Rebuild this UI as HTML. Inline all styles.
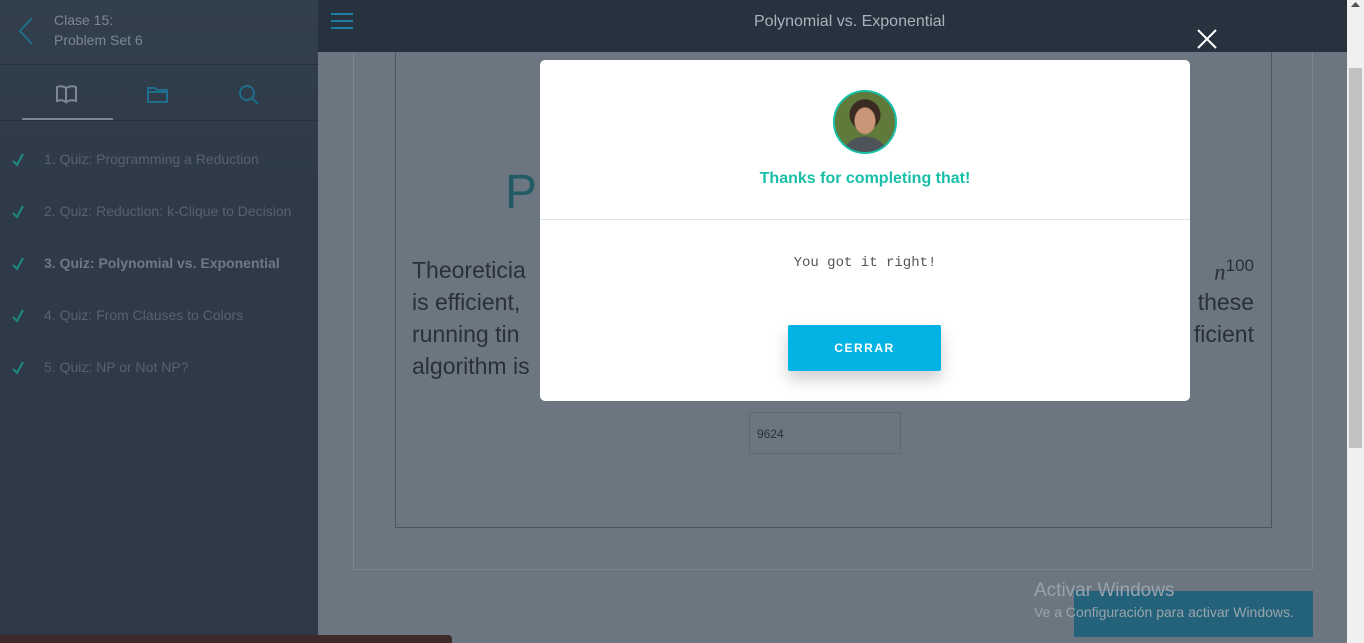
<!DOCTYPE html>
<html><head><meta charset="utf-8"><style>
*{margin:0;padding:0;box-sizing:border-box}
body{width:1364px;height:643px;overflow:hidden;background:#6b7680;font-family:"Liberation Sans",sans-serif;position:relative}
.side{position:absolute;left:0;top:0;width:318px;height:643px;background:linear-gradient(#323f4c,#2e3a47 30%,#2e3a47)}
.side .hdr{height:65px;border-bottom:1px solid #27313c;position:relative}
.side .t{position:absolute;left:54px;top:10px;color:#7c8792;font-size:14px;line-height:20px}
.tabs{height:56px;border-bottom:1px solid #27313c;position:relative}
.tabs .ul{position:absolute;left:22px;bottom:0;width:91px;height:2px;background:#7c8792}
.item{position:absolute;left:0;font-size:14px;color:#56626d}
.item .ck{position:absolute;left:12px;top:2px}
.item span.l{position:absolute;left:44px;white-space:nowrap}
.top{position:absolute;left:318px;top:0;width:1029px;height:52px;background:#27323f;color:#aab3bb;font-size:16px;line-height:44px}
.top span{position:absolute;left:436px}
.scroll{position:absolute;left:1347px;top:0;width:17px;height:643px;background:#f0f0f0}
.scroll i{position:absolute;left:2px;top:68px;width:13px;height:380px;background:#c1c1c1}
.card{position:absolute;left:353px;top:40px;width:960px;height:530px;border:1px solid #7a848d}
.inner{position:absolute;left:395px;top:40px;width:877px;height:488px;border:1px solid #4d5660;border-top:none}
.txt{position:absolute;left:412px;font-size:23px;color:#2a3037;line-height:32px;white-space:nowrap}
.r{left:auto;right:110px}
.modal{position:absolute;left:540px;top:60px;width:650px;height:341px;background:#fff;border-radius:5px}
.av{position:absolute;left:293px;top:30px;width:64px;height:64px;border-radius:50%;border:2px solid #17bfa8;background:radial-gradient(ellipse 11px 14px at 50% 48%,#c99677 0 10px,transparent 11px),radial-gradient(circle at 50% 38%,#3a2b22 0 15px,transparent 16px),radial-gradient(circle at 50% 115%,#4d5358 0 24px,transparent 25px),#5f7a3a;overflow:hidden}
.thx{position:absolute;left:0;width:100%;top:110px;text-align:center;color:#17bfa8;font-size:16px;font-weight:bold}
.hr{position:absolute;left:0;right:0;top:159px;height:1px;background:#dde3e8}
.got{position:absolute;left:0;width:100%;top:195px;text-align:center;font-family:"Liberation Mono",monospace;font-size:14px;color:#555}
.btn{position:absolute;left:248px;top:265px;width:153px;height:46px;background:#02b3e4;color:#fff;font-size:12px;font-weight:bold;letter-spacing:1.5px;text-align:center;line-height:46px;border-radius:2px;box-shadow:0 8px 16px rgba(0,0,0,.2)}
</style></head><body>
<div class="side">
 <div class="hdr">
  <svg style="position:absolute;left:17px;top:16px" width="18" height="30"><path d="M15 2 L3 15 L15 28" stroke="#1e6e8c" stroke-width="2" fill="none"/></svg>
  <div class="t">Clase 15:<br>Problem Set 6</div>
 </div>
 <div class="tabs">
  <svg style="position:absolute;left:55px;top:19px" width="24" height="20"><path d="M2 3 Q7 1 11 4 V18 Q7 15 2 17 Z M11 4 Q16 1 21 3 V17 Q16 15 11 18" stroke="#7c8792" stroke-width="2" fill="none"/></svg>
  <svg style="position:absolute;left:147px;top:20px" width="22" height="20"><path d="M1 3 H8 L10 5 H20 V17 H1 Z M1 7 H20" stroke="#1e6e8c" stroke-width="2" fill="none"/></svg>
  <svg style="position:absolute;left:238px;top:19px" width="22" height="22"><circle cx="9" cy="9" r="7" stroke="#1e6e8c" stroke-width="2" fill="none"/><path d="M14 14 L20 20" stroke="#1e6e8c" stroke-width="2"/></svg>
  <div class="ul"></div>
 </div>
 <div class="item" style="top:151px"><svg class="ck" width="12" height="14"><path d="M1 8 L5 12 L11 1" stroke="#1f8a82" stroke-width="2" fill="none"/></svg><span class="l">1. Quiz: Programming a Reduction</span></div>
 <div class="item" style="top:203px"><svg class="ck" width="12" height="14"><path d="M1 8 L5 12 L11 1" stroke="#1f8a82" stroke-width="2" fill="none"/></svg><span class="l">2. Quiz: Reduction: k-Clique to Decision</span></div>
 <div class="item" style="top:255px;color:#6d7985;font-weight:bold"><svg class="ck" width="12" height="14"><path d="M1 8 L5 12 L11 1" stroke="#1f8a82" stroke-width="2" fill="none"/></svg><span class="l">3. Quiz: Polynomial vs. Exponential</span></div>
 <div class="item" style="top:307px"><svg class="ck" width="12" height="14"><path d="M1 8 L5 12 L11 1" stroke="#1f8a82" stroke-width="2" fill="none"/></svg><span class="l">4. Quiz: From Clauses to Colors</span></div>
 <div class="item" style="top:359px"><svg class="ck" width="12" height="14"><path d="M1 8 L5 12 L11 1" stroke="#1f8a82" stroke-width="2" fill="none"/></svg><span class="l">5. Quiz: NP or Not NP?</span></div>
</div>
<div class="card"></div>
<div class="inner"></div>
<div style="position:absolute;left:505px;top:165px;font-size:48px;color:#225b66">P</div>
<div class="txt" style="top:254px">Theoreticia</div>
<div class="txt" style="top:286px">is efficient,</div>
<div class="txt" style="top:318px">running tin</div>
<div class="txt" style="top:350px">algorithm is</div>
<div class="txt r" style="top:250px"><i style="font-family:'Liberation Serif',serif">n</i><sup style="font-size:17px">100</sup></div>
<div class="txt r" style="top:286px">these</div>
<div class="txt r" style="top:318px">ficient</div>
<div style="position:absolute;left:749px;top:412px;width:152px;height:42px;border:1px solid #5f6973;font-size:12px;color:#2a3037;padding:14px 7px">9624</div>
<div class="top"><span>Polynomial vs. Exponential</span></div>
<svg style="position:absolute;left:331px;top:12px" width="22" height="18"><path d="M0 2H22M0 9H22M0 16H22" stroke="#1e7ea2" stroke-width="2"/></svg>
<div class="scroll"><i></i><svg style="position:absolute;left:4px;top:2px" width="9" height="6"><path d="M0 5H9L4.5 0Z" fill="#505050"/></svg></div>
<svg style="position:absolute;left:1197px;top:29px" width="20" height="20"><path d="M1 1L19 19M19 1L1 19" stroke="#fff" stroke-width="2"/></svg>
<div class="modal">
 <div class="av"></div>
 <div class="thx">Thanks for completing that!</div>
 <div class="hr"></div>
 <div class="got">You got it right!</div>
 <div class="btn">CERRAR</div>
</div>
<div style="position:absolute;left:1074px;top:591px;width:239px;height:46px;background:#23627a"></div>
<div style="position:absolute;left:1034px;top:580px;color:#9aa3ab;font-size:19px">Activar Windows</div>
<div style="position:absolute;left:1034px;top:604px;color:#9aa3ab;font-size:14px">Ve a Configuración para activar Windows.</div>
<div style="position:absolute;left:0;top:635px;width:452px;height:8px;background:#3e2a2a;border-radius:0 4px 0 0"></div>
</body></html>
